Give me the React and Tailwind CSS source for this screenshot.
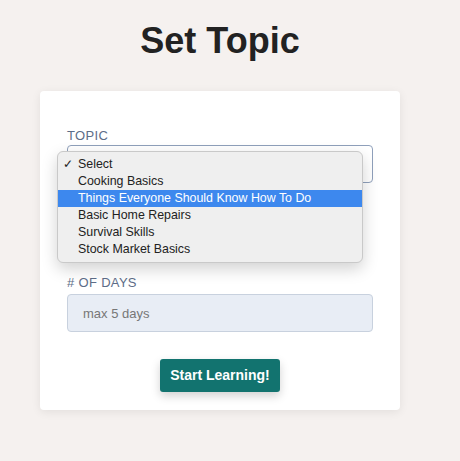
import { useState } from 'react';

const topics = [
  'Select',
  'Cooking Basics',
  'Things Everyone Should Know How To Do',
  'Basic Home Repairs',
  'Survival Skills',
  'Stock Market Basics',
];

export default function App() {
  const [days, setDays] = useState('');
  const selected = 0;
  const hovered = 2;

  return (
    <div className="min-h-screen bg-[#f5f1ef] font-['Liberation_Sans',Arial,sans-serif] pt-[21px] pl-[40px]">
      <div className="w-[360px]">
        <h1 className="text-center text-[36px] leading-[40px] font-bold text-[#222]">Set Topic</h1>

        {/* card */}
        <div className="mt-[30px] w-[360px] h-[319px] bg-white rounded-[4px] shadow-[0_2px_10px_rgba(0,0,0,0.08)] px-[27px] pt-[36px] flex flex-col">
          <label className="text-[13px] leading-[18px] tracking-wide uppercase text-[#5d6d88]">Topic</label>

          {/* select, opened */}
          <div className="relative">
            <div className="h-[38px] w-full rounded-[4px] border border-[#8fa0bb] bg-white"></div>

            <div className="absolute left-[-10px] top-[6px] w-[306px] rounded-[6px] border border-[#c9c9c9] bg-[#efefef] py-[4px] shadow-[0_6px_16px_rgba(0,0,0,0.18)] z-10">
              {topics.map((t, i) => (
                <div
                  key={t}
                  className={`relative h-[17px] pl-[20px] text-[12.4px] leading-[17px] ${
                    i === hovered ? 'bg-[#3d88ee] text-white' : 'text-[#222]'
                  }`}
                >
                  {i === selected && (
                    <span className="absolute left-[5px] top-0 text-[12px]">✓</span>
                  )}
                  {t}
                </div>
              ))}
            </div>
          </div>

          <label className="mt-[91px] text-[13px] leading-[18px] tracking-wide uppercase text-[#5d6d88] mb-[2px]"># of days</label>
          <input
            value={days}
            onChange={(e) => setDays(e.target.value.replace(/\D/g, ''))}
            placeholder="max 5 days"
            className="h-[38px] w-full rounded-[4px] border border-[#c8d1de] bg-[#e8edf5] px-[15px] text-[13px] text-[#333] placeholder:text-[#777] focus:outline-none"
          />

          <div className="mt-[27px] flex justify-center">
            <button className="h-[33px] px-[10px] rounded-[3px] bg-[#12736f] text-white text-[14px] font-bold shadow-[0_4px_10px_rgba(0,0,0,0.18)]">
              Start Learning!
            </button>
          </div>
        </div>
      </div>
    </div>
  );
}
